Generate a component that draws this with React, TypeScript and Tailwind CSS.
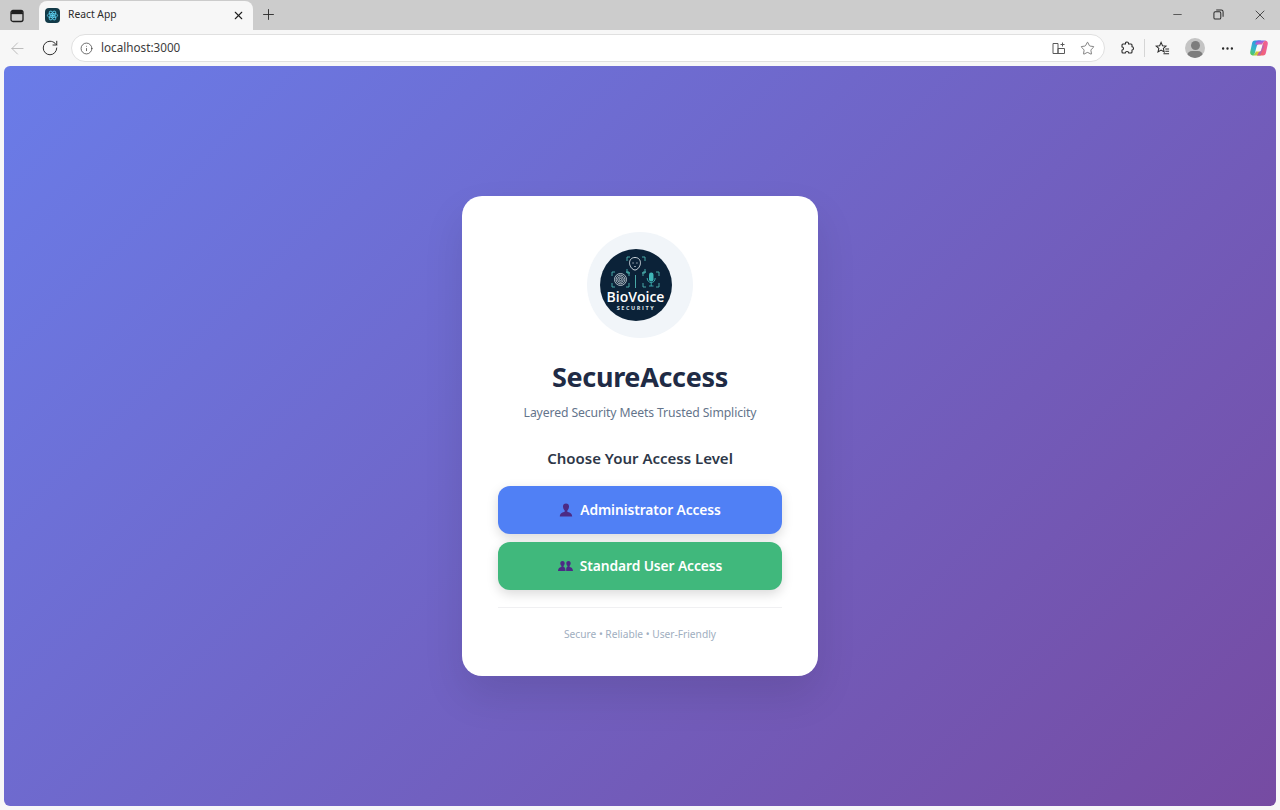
import { ArrowLeft, RotateCw, Info, X, Plus, Minus, Star, MoreHorizontal } from 'lucide-react';

function Logo() {
  return (
    <svg viewBox="0 0 72 72" className="w-[72px] h-[72px]">
      <circle cx="36" cy="36" r="36" fill="#0b2238" />
      <g fill="none" stroke="#4fb8b4" strokeWidth="0.9">
        {/* face brackets */}
        <path d="M27 12V8h3M42 8h3v4M27 20v4h3M42 24h3v-4" />
        {/* fingerprint brackets */}
        <path d="M12 27v-4h3M26 23h3v4M12 34v4h3M26 38h3v-4" />
        {/* mic brackets */}
        <path d="M43 27v-4h3M56 23h3v4M43 34v4h3M56 38h3v-4" />
        <path d="M35.500 26v13" />
      </g>
      <path d="M35 8.500c-3.800 0-5.800 2.800-5.400 6.200.3 2.700 2.800 6.300 5.400 6.300s5.100-3.600 5.400-6.300C40.800 11.300 38.800 8.500 35 8.500z" fill="none" stroke="#e2eaee" strokeWidth="0.9" />
      <path d="M32.200 14h1.800M36 14h1.800M34 17.500h2" stroke="#e2eaee" strokeWidth="0.6" />
      <g fill="none" stroke="#d5dde2" strokeWidth="0.8">
        <circle cx="20.500" cy="30.500" r="1.200" />
        <circle cx="20.500" cy="30.500" r="2.800" />
        <circle cx="20.500" cy="30.500" r="4.400" />
        <circle cx="20.500" cy="30.500" r="6" />
      </g>
      <rect x="49" y="23.500" width="4.500" height="9" rx="2.200" fill="#3fb6b8" />
      <path d="M47.200 29c0 6 8 6 8 0M51.200 33.500v3.500M49 37h4.500" fill="none" stroke="#3fb6b8" strokeWidth="0.9" />
      <text x="35.500" y="53" textAnchor="middle" fill="#ffffff" fontSize="14" fontWeight="600" fontFamily="'Open Sans', sans-serif">BioVoice</text>
      <text x="36" y="61" textAnchor="middle" fill="#dfe5ea" fontSize="5.500" fontWeight="700" letterSpacing="1.600" fontFamily="'Open Sans', sans-serif">SECURITY</text>
    </svg>
  );
}

function UserGlyph() {
  return (
    <svg viewBox="0 0 14 14" className="w-[14px] h-[14px]">
      <path d="M7 0.500c-2.100 0-3.200 1.500-3 3.500.2 1.700 1 3 1.700 3.600v1.200C4 9.500 1 10 .8 13.500h12.400C13 10 10 9.500 8.300 8.800V7.600C9 7 9.800 5.700 10 4c.2-2-.9-3.500-3-3.500z" fill="#4c2a85" />
    </svg>
  );
}

function UsersGlyph() {
  return (
    <svg viewBox="0 0 15 12" className="w-[15px] h-[12px]">
      <path d="M4.500 1C3 1 2.200 2 2.300 3.500c.1 1.200.7 2.100 1.200 2.500v.8C2.300 7.300.3 7.800 0 11h7.500C7.400 7.800 6.700 7.300 5.500 6.800V6c.5-.4 1.100-1.300 1.200-2.500C6.800 2 6 1 4.500 1z" fill="#4c2a85" />
      <path d="M10.500 1C9 1 8.200 2 8.300 3.500c.1 1.200.7 2.100 1.200 2.500v.8c-1.200.5-1.300 1-1.300 4.200H15c-.3-3.200-2.300-3.700-3.500-4.200V6c.5-.4 1.100-1.300 1.200-2.500C12.800 2 12 1 10.500 1z" fill="#4c2a85" />
    </svg>
  );
}

function Copilot() {
  return (
    <svg viewBox="0 0 20 20" className="w-5 h-5">
      <defs>
        <linearGradient id="cpA" x1="0.7" y1="0" x2="0.2" y2="1">
          <stop offset="0" stopColor="#2f8fe8" />
          <stop offset="0.6" stopColor="#35b8c8" />
          <stop offset="1" stopColor="#52c95f" />
        </linearGradient>
        <linearGradient id="cpB" x1="0" y1="0" x2="1" y2="0">
          <stop offset="0" stopColor="#6fcf4f" />
          <stop offset="0.6" stopColor="#f5c52e" />
          <stop offset="1" stopColor="#f58a3c" />
        </linearGradient>
        <linearGradient id="cpC" x1="0.3" y1="0" x2="0.8" y2="1">
          <stop offset="0" stopColor="#5a6ee8" />
          <stop offset="0.5" stopColor="#b45fd8" />
          <stop offset="1" stopColor="#ee5f8c" />
        </linearGradient>
        <linearGradient id="cpD" x1="0" y1="0" x2="1" y2="0">
          <stop offset="0" stopColor="#f0664c" />
          <stop offset="1" stopColor="#ef5fa0" />
        </linearGradient>
      </defs>
      <path d="M3 17.500h7.500c1.500 0 2.300-.8 2.800-2.300l.5-1.700H7L5.500 16z" fill="url(#cpB)" />
      <path d="M6 2.500h6L10 6C8.500 6 8 7 7.500 9L6 14.500C5.500 16.500 4.500 17.500 3 17.300 1.500 17 1 15.500 1.200 14L3 5.500C3.300 3.500 4.300 2.500 6 2.500z" fill="url(#cpA)" />
      <path d="M17 2.500H9.500C8 2.500 7.200 3.300 6.700 4.800L6.200 6.500H13L14.500 4z" fill="url(#cpC)" />
      <path d="M14 17.500H8L10 14C11.500 14 12 13 12.500 11L14 5.500C14.500 3.500 15.500 2.500 17 2.700 18.500 3 19 4.500 18.800 6L17 14.500C16.700 16.500 15.700 17.500 14 17.500z" fill="url(#cpD)" />
      <path d="M14 5.500L12.500 11C12 13 11.500 14 10 14L8 17.500H11L15 9z" fill="#8f62e0" opacity="0.55" />
    </svg>
  );
}

export default function App() {
  return (
    <div className="w-[1280px] h-[810px] flex flex-col overflow-hidden bg-[#f7f7f7] font-['Noto_Sans','Open_Sans',sans-serif]">
      <div className="h-[30px] bg-[#cccccc] flex items-end shrink-0">
        <div className="w-[39px] h-[28px] flex items-center pl-[10px]">
          <svg viewBox="0 0 14 14" className="w-[14px] h-[14px]" fill="none" stroke="#1f1f1f" strokeWidth="1.300">
            <rect x="1" y="1.500" width="12" height="11" rx="2" />
            <path d="M1 4.500h12" />
            <path d="M1.500 2h11v2.500h-11z" fill="#1f1f1f" stroke="none" />
          </svg>
        </div>
        <div className="w-[214px] h-[29px] bg-[#f7f7f7] rounded-t-lg flex items-center pb-[1px] pl-[6px] pr-[8px]">
          <div className="w-[15px] h-[15px] rounded-sm bg-[#123a48] flex items-center justify-center">
            <svg viewBox="0 0 14 14" className="w-[13px] h-[13px]" fill="none" stroke="#61dafb" strokeWidth="0.8">
              <circle cx="7" cy="7" r="1.200" fill="#61dafb" />
              <ellipse cx="7" cy="7" rx="5.500" ry="2.200" />
              <ellipse cx="7" cy="7" rx="5.500" ry="2.200" transform="rotate(60 7 7)" />
              <ellipse cx="7" cy="7" rx="5.500" ry="2.200" transform="rotate(120 7 7)" />
            </svg>
          </div>
          <span className="ml-[8px] text-[10.300px] text-[#2b2b2b] flex-1">React App</span>
          <X size={13} strokeWidth={2} className="text-[#1f1f1f]" />
        </div>
        <div className="w-[30px] h-[31px] flex items-center justify-center">
          <Plus size={17} strokeWidth={1.300} className="text-[#2a2a2a]" />
        </div>
        <div className="flex-1" />
        <div className="flex items-center h-[30px] pb-[1px] text-[#2a2a2a]">
          <div className="w-[41px] flex justify-center"><Minus size={13} strokeWidth={1.300} /></div>
          <div className="w-[41px] flex justify-center">
            <svg viewBox="0 0 12 12" className="w-[11px] h-[11px]" fill="none" stroke="#2a2a2a" strokeWidth="1.100">
              <rect x="1" y="3" width="7.500" height="8" rx="1.500" />
              <path d="M3.500 1h5.500a2 2 0 0 1 2 2v5.500" />
            </svg>
          </div>
          <div className="w-[41px] flex justify-center"><X size={16} strokeWidth={1.200} /></div>
        </div>
      </div>
      <div className="h-[36px] bg-[#f7f7f7] flex items-center shrink-0 text-[#2a2a2a]">
        <div className="w-[35px] flex justify-center"><ArrowLeft size={19} strokeWidth={1.100} className="text-[#b4b4b4]" /></div>
        <div className="w-[29px] flex justify-center"><RotateCw size={18} strokeWidth={1.300} /></div>
        <div className="ml-[7px] w-[1034px] h-[28px] bg-white rounded-full border border-[#e0e0e0] flex items-center px-[8px]">
          <Info size={13} strokeWidth={1.300} className="text-[#333333]" />
          <span className="ml-[8px] text-[11.700px] text-[#3c3c3c] flex-1">localhost:3000</span>
          <svg viewBox="0 0 14 14" className="w-[14px] h-[14px] mr-[14px]" fill="none" stroke="#5a5a5a" strokeWidth="1">
            <path d="M1 2.500h5v10H1zM6 7.500h6.500v5H6zM8.500 3.500h4M10.500 1.500v4" />
          </svg>
          <Star size={15} strokeWidth={1.100} className="text-[#4a4a4a] mr-[1px]" />
        </div>
        <div className="w-[43px] flex justify-center">
          <svg viewBox="0 0 16 16" className="w-[16px] h-[16px]" fill="none" stroke="#2a2a2a" strokeWidth="1.100" strokeLinejoin="round">
            <path d="M6.500 3.200C6.500 1.500 9.500 1.500 9.500 3.200V4H12a1 1 0 0 1 1 1V6.800C15 6.800 15 10 13 10V12a1 1 0 0 1-1 1H9.700C9.700 11 6.300 11 6.300 13H4a1 1 0 0 1-1-1V10C5 10 5 7 3 7V5a1 1 0 0 1 1-1H6.500z" />
          </svg>
        </div>
        <div className="h-[18px] w-px bg-[#d5d5d5] -ml-[4px]" />
        <div className="w-[35px] flex justify-center">
          <svg viewBox="0 0 16 16" className="w-[15px] h-[15px]" fill="none" stroke="#2a2a2a" strokeWidth="1.100">
            <path d="M6.500 1.500l1.500 3.600 3.700.3-2.800 2.500.9 3.800-3.300-2-3.300 2 .9-3.800L1.300 5.400 5 5.100z" />
            <path d="M11 8.500h4M11 11h4M9 13.500h6" />
          </svg>
        </div>
        <div className="w-[20px] h-[20px] rounded-full bg-[#c4c4c4] overflow-hidden flex flex-col items-center ml-[5px]">
          <div className="w-[9px] h-[9px] mt-[3px] rounded-full bg-[#7d7d7d] shrink-0" />
          <div className="w-[16px] h-[10px] mt-[1px] rounded-full bg-[#7d7d7d] shrink-0" />
        </div>
        <div className="w-[44px] flex justify-center"><MoreHorizontal size={15} strokeWidth={1.800} /></div>
        <Copilot />
      </div>
      <div className="flex-1 px-[4px] pb-[4px]">
        <div className="h-full rounded-md bg-[linear-gradient(135deg,#6a7ce8_0%,#764ba2_100%)] flex items-center justify-center">
          <div className="w-[356px] h-[480px] bg-white rounded-[20px] shadow-[0_20px_40px_rgba(0,0,0,0.1)] p-[36px] flex flex-col items-center">
            <div className="w-[106px] h-[106px] rounded-full bg-[#f1f5f9] flex items-center pl-[13px] shrink-0">
              <Logo />
            </div>
            <h1 className="mt-[21px] text-[27px] leading-[36px] tracking-[-0.33px] font-bold text-[#202b45]">SecureAccess</h1>
            <p className="mt-[8px] text-[12.200px] leading-[20px] tracking-[-0.1px] text-[#64748b]">Layered Security Meets Trusted Simplicity</p>
            <h2 className="mt-[24px] text-[15px] leading-[22px] font-semibold text-[#2d3748]">Choose Your Access Level</h2>
            <button className="mt-[17px] w-[284px] h-[48px] shrink-0 rounded-[12px] bg-[#5080f5] text-white text-[13.800px] tracking-[-0.1px] font-semibold flex items-center justify-center gap-[7px] shadow-[0_4px_12px_rgba(0,0,0,0.15)]">
              <UserGlyph />
              Administrator Access
            </button>
            <button className="mt-[8px] w-[284px] h-[48px] shrink-0 rounded-[12px] bg-[#40b87c] text-white text-[13.800px] tracking-[-0.1px] font-semibold flex items-center justify-center gap-[7px] shadow-[0_4px_12px_rgba(0,0,0,0.15)]">
              <UsersGlyph />
              Standard User Access
            </button>
            <div className="mt-[17px] w-[284px] border-t border-[#f0f0f2] pt-[18px] text-center text-[10.200px] leading-[16px] text-[#a0aec0]">
              Secure • Reliable • User-Friendly
            </div>
          </div>
        </div>
      </div>
    </div>
  );
}
